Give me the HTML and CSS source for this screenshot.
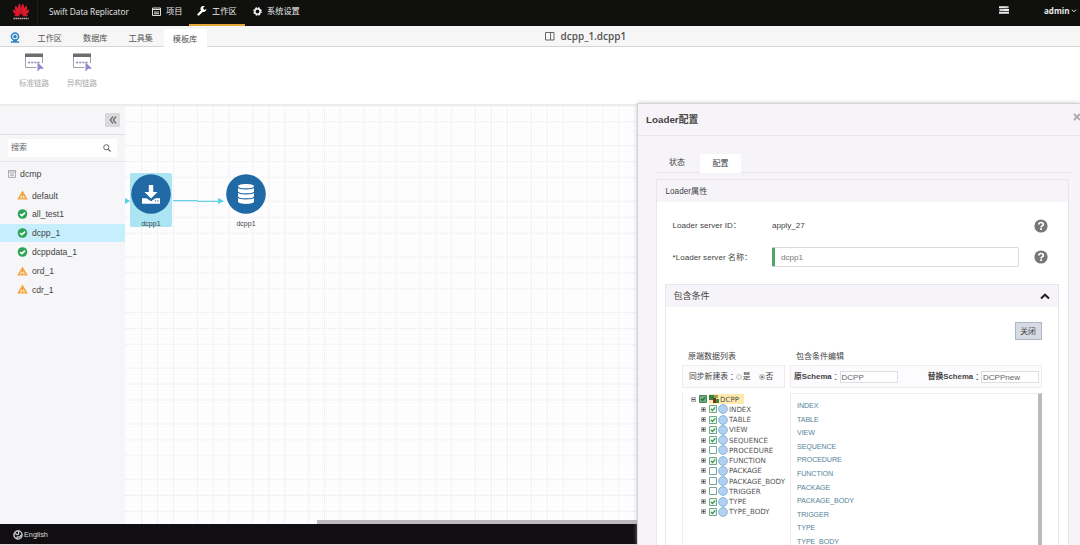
FILE: index.html
```html
<!DOCTYPE html>
<html lang="zh-CN">
<head>
<meta charset="utf-8">
<title>Swift Data Replicator</title>
<link rel="stylesheet" href="styles.css">
</head>
<body>
<svg class="defs" width="0" height="0">
  <defs>
    <symbol id="warn" viewBox="0 0 10 9"><path d="M5 .3 9.8 8.700H.2Z" fill="#f3a23c"/><path d="M5 3.200 6 5 7.600 7.400H2.400L4 5Z" fill="#fbe3bd"/><path d="M5 3.500v2.200M5 6.400v.8" stroke="#ee9526" stroke-width="1"/></symbol>
    <symbol id="ok" viewBox="0 0 10 10"><circle cx="5" cy="5" r="4.800" fill="#2ba457"/><path d="M2.600 5.100 4.400 6.700 7.600 3.700" fill="none" stroke="#fff" stroke-width="1.700"/></symbol>
    <symbol id="help" viewBox="0 0 14 14"><circle cx="7" cy="7" r="6.600" fill="#77767a"/><path d="M4.800 5.500C4.900 3.900 6 3.500 7 3.500c1.300 0 2.300.7 2.300 1.900 0 1.500-2.200 1.500-2.200 3" fill="none" stroke="#fff" stroke-width="1.700"/><path d="M7.100 9.300v1.700" stroke="#fff" stroke-width="1.800"/></symbol>
    <symbol id="flow" viewBox="0 0 20 20"><path d="M1.500 3v11.500h11M18.500 3v7" fill="none" stroke="#a0a0ac" stroke-width="1"/><path d="M1 .5h18v3.500H1z" fill="#6d6b70"/><path d="M4 9.500h12" stroke="#8887a8" stroke-width="1.500" stroke-dasharray="2 1.200"/><path d="M13.500 9.500v9l2.500-2.500 4-.5Z" fill="#8f8bcd"/></symbol>
    <symbol id="plus" viewBox="0 0 5 5"><path d="M.5.5h4v4h-4z" fill="#ddd" stroke="#888" stroke-width=".7"/><path d="M1 2.500h3M2.500 1v3" stroke="#444" stroke-width=".8"/></symbol>
    <symbol id="minus" viewBox="0 0 5 5"><path d="M.5.5h4v4h-4z" fill="#ddd" stroke="#888" stroke-width=".7"/><path d="M1 2.500h3" stroke="#333" stroke-width=".8"/></symbol>
    <symbol id="box" viewBox="0 0 8 8"><path d="M.5.5h7v7h-7z" fill="#fff" stroke="#76a89e"/></symbol>
    <symbol id="boxon" viewBox="0 0 8 8"><path d="M.5.5h7v7h-7z" fill="#edf8ed" stroke="#6fa88e"/><path d="M2 4 3.500 5.500 6.200 2.400" fill="none" stroke="#35934a" stroke-width="1.200"/></symbol>
    <symbol id="ball" viewBox="0 0 10 10"><circle cx="5" cy="5" r="4.400" fill="#b0d1f1" stroke="#7aa9d6" stroke-width=".8"/></symbol>
  </defs>
</svg>
<div class="app">
  <header class="topbar">
    <div class="logo">
      <svg width="18" height="18" viewBox="0 0 18 18"><g fill="#dc1a2e"><path d="M8.700 13C5.500 9 5 4 7.500 1.500 9 3 9.200 8 8.700 13Z"/><path d="M9.300 13C12.500 9 13 4 10.500 1.500 9 3 8.800 8 9.300 13Z"/><path d="M8 13.300C4 11 1.800 7 3.500 3.500 6 5 7.500 9 8 13.300Z"/><path d="M10 13.300C14 11 16.200 7 14.500 3.500 12 5 10.500 9 10 13.300Z"/><path d="M7.500 13.700C3 13.200.8 10.500.8 7.500 4 8 6.500 10.800 7.500 13.700Z"/><path d="M10.500 13.700c4.500-.5 6.700-3.200 6.700-6.200-3.200.5-5.700 3.300-6.700 6.200Z"/><path d="M7.300 14.200H3l-1-1.400h5ZM10.700 14.200H15l1-1.400h-5Z"/></g><path d="M1.500 16.500h15" stroke="#c9a9a9" stroke-width="1.600" stroke-dasharray="1.500 .5"/></svg>
    </div>
    <div class="brand">Swift Data Replicator</div>
    <nav class="nav">
      <a class="nav-item n1"><svg width="9" height="9" viewBox="0 0 9 9"><path d="M.5 1h8v7.500h-8zM.5 2.500h8M2 5h5M2 6.700h5" fill="none" stroke="#ddd"/></svg>项目</a>
      <a class="nav-item n2 active"><svg width="10" height="10" viewBox="0 0 10 10"><path d="M1.500 8.500 6 4" stroke="#fff" stroke-width="2.300" stroke-linecap="round"/><path d="M8.300.5A3 3 0 1 0 9.500 3L7.500 4 6 2.500 7 .6Z" fill="#fff"/></svg>工作区</a>
      <a class="nav-item n3"><svg width="9" height="9" viewBox="0 0 9 9"><circle cx="4.500" cy="4.500" r="3.500" fill="none" stroke="#fff" stroke-width="1.500" stroke-dasharray="1.800 .95"/><circle cx="4.500" cy="4.500" r="2.600" fill="none" stroke="#fff" stroke-width="1.300"/></svg>系统设置</a>
    </nav>
    <svg class="server" width="10" height="8" viewBox="0 0 10 8"><path d="M0 1.200h9.500M.5 4h9.500M0 6.800h10" stroke="#eee" stroke-width="2.100"/><path d="M6 1.200h3M1 4h4" stroke="#999" stroke-width=".6"/></svg>
    <div class="user">admin<svg width="6" height="4" viewBox="0 0 6 4"><path d="m.8.7 2.200 2 2.200-2" fill="none" stroke="#ddd"/></svg></div>
  </header>
  <div class="tabs">
    <svg class="cam" width="10" height="11" viewBox="0 0 10 11"><circle cx="5" cy="4.500" r="3.600" fill="#c8e6f6" stroke="#3484c4" stroke-width="1.500"/><circle cx="5" cy="4.500" r="1.500" fill="#2878b8"/><path d="M.8 10h8.400M3 8.500h4" stroke="#3484c4" stroke-width="1.300"/></svg>
    <span class="tab t1">工作区</span><span class="tab">数据库</span><span class="tab">工具集</span><span class="tab on">模板库</span>
    <div class="doc"><svg width="10" height="9" viewBox="0 0 10 9"><path d="M.5.5h8.500v7.500H.5zM5.500.5V8" fill="none" stroke="#666"/></svg>dcpp_1.dcpp1</div>
  </div>
  <div class="ribbon">
    <div class="tool"><svg width="20" height="20"><use href="#flow"/></svg><span>标准链路</span></div>
    <div class="tool"><svg width="20" height="20"><use href="#flow"/></svg><span>异构链路</span></div>
  </div>
  <main class="main">
    <aside class="side">
      <div class="side-head"><span class="collapse"><svg width="8" height="8" viewBox="0 0 8 8"><path d="M4 .7 1.300 4 4 7.300M7 .7 4.300 4 7 7.300" fill="none" stroke="#555" stroke-width="1.100"/></svg></span></div>
      <div class="search"><div class="search-box"><span>搜索</span><svg width="8" height="8" viewBox="0 0 8 8"><circle cx="3.300" cy="3.300" r="2.600" fill="none" stroke="#666"/><path d="m5.200 5.200 2.300 2.300" stroke="#666" stroke-width="1.200"/></svg></div></div>
      <div class="root"><svg width="8" height="8" viewBox="0 0 8 8"><path d="M.5.5h7v7h-7zM.5 2h7M2 4h4M2 5.700h4" fill="none" stroke="#999" stroke-width=".8"/></svg>dcmp</div>
      <div class="leaf"><svg width="11" height="10"><use href="#warn"/></svg><span>default</span></div>
      <div class="leaf"><svg width="11" height="10"><use href="#ok"/></svg><span>all_test1</span></div>
      <div class="leaf sel"><svg width="11" height="10"><use href="#ok"/></svg><span>dcpp_1</span></div>
      <div class="leaf"><svg width="11" height="10"><use href="#ok"/></svg><span>dcppdata_1</span></div>
      <div class="leaf"><svg width="11" height="10"><use href="#warn"/></svg><span>ord_1</span></div>
      <div class="leaf"><svg width="11" height="10"><use href="#warn"/></svg><span>cdr_1</span></div>
    </aside>
    <section class="canvas">
      <svg class="wire" width="110" height="10" viewBox="0 0 110 10"><path d="M0 2v6l5-3ZM93 2v6l6-3Z" fill="#55cfe2"/><path d="M48 4.700h24l1 .6h21" fill="none" stroke="#65d3e5" stroke-width="1.300"/></svg>
      <div class="node node-a"><svg width="40" height="40" viewBox="0 0 40 40"><circle cx="20" cy="20" r="19.800" fill="#2169a5"/><path d="M17.800 11h4.400v7h4.300L20 24.500 13.500 18h4.300Z" fill="#fff"/><path d="M11 24.200h4.500l4.500 3 4.500-3H29v5.500H11Z" fill="#fff"/><circle cx="24.500" cy="27" r=".7" fill="#2169a5"/><circle cx="27" cy="27" r=".7" fill="#2169a5"/></svg><span>dcpp1</span></div>
      <div class="node node-b"><svg width="40" height="40" viewBox="0 0 40 40"><circle cx="20" cy="20" r="19.800" fill="#2169a5"/><path d="M12 12.500c0-3.200 16-3.200 16 0v15c0 3.200-16 3.200-16 0Z" fill="#fff"/><path d="M12 13c1 2.500 15 2.500 16 0M12 18c1 2.500 15 2.500 16 0M12 23c1 2.500 15 2.500 16 0" fill="none" stroke="#2169a5" stroke-width="1.100"/></svg><span>dcpp1</span></div>
      <div class="hscroll"></div>
    </section>
  </main>
  <footer class="foot"><svg width="10" height="10" viewBox="0 0 10 10"><circle cx="5" cy="5" r="4.100" fill="none" stroke="#ddd" stroke-width="1.300"/><path d="M1.500 4c2-1 2 1 3.500.5S5 1 6 1M4 9c-1-2 1-2.500 2-2s1.500-2 2.500-2" fill="none" stroke="#ddd" stroke-width="1.200"/></svg>English</footer>

  <section class="panel">
    <div class="panel-head"><b>Loader配置</b><svg width="8" height="8" viewBox="0 0 8 8"><path d="m1 1 6 6m0-6L1 7" stroke="#aaa" stroke-width="1.800"/></svg></div>
    <div class="panel-tabs"><span>状态</span><span class="on">配置</span></div>
    <div class="card">
      <div class="card-head">Loader属性</div>
      <div class="card-body">
        <div class="row"><label>Loader server ID<i class="colon">：</i></label><span class="val">apply_27</span><svg width="14" height="14"><use href="#help"/></svg></div>
        <div class="row"><label>*Loader server 名称<i class="colon">：</i></label><div class="input">dcpp1</div><svg width="14" height="14"><use href="#help"/></svg></div>
        <div class="inner">
          <div class="inner-head">包含条件<svg width="10" height="7" viewBox="0 0 10 7"><path d="m1 5.500 4-3.800 4 3.800" fill="none" stroke="#222" stroke-width="2"/></svg></div>
          <div class="btn-row"><span class="btn">关闭</span></div>
          <div class="cols">
            <div class="col-l">
              <div class="col-title">原端数据列表</div>
              <div class="strip sync">同步新建表<i class="colon">：</i><span class="radio"></span>是<span class="radio checked"></span>否</div>
              <div class="tree">
                <div class="tr top"><svg width="5" height="5"><use href="#minus"/></svg><svg class="cb" width="8" height="8" viewBox="0 0 8 8"><path d="M.5.5h7v7h-7z" fill="#79ae82" stroke="#46825b"/><path d="M2 4 3.500 5.500 6.200 2.400" fill="none" stroke="#26713c" stroke-width="1.200"/></svg><span class="hl"><svg width="10" height="9" viewBox="0 0 10 9"><path d="M0 0h5v5H0z" fill="#33833c"/><path d="M4 3h3v5H4z" fill="#7b3528"/><path d="M5 0h4v3H5z" fill="#a59d5c"/><path d="M7 4h3v4H7z" fill="#3a8740"/></svg>DCPP</span></div>
                <div class="tr"><svg width="5" height="5"><use href="#plus"/></svg><svg class="cb" width="8" height="8"><use href="#boxon"/></svg><svg class="ball" width="10" height="10"><use href="#ball"/></svg>INDEX</div>
                <div class="tr"><svg width="5" height="5"><use href="#plus"/></svg><svg class="cb" width="8" height="8"><use href="#boxon"/></svg><svg class="ball" width="10" height="10"><use href="#ball"/></svg>TABLE</div>
                <div class="tr"><svg width="5" height="5"><use href="#plus"/></svg><svg class="cb" width="8" height="8"><use href="#boxon"/></svg><svg class="ball" width="10" height="10"><use href="#ball"/></svg>VIEW</div>
                <div class="tr"><svg width="5" height="5"><use href="#plus"/></svg><svg class="cb" width="8" height="8"><use href="#boxon"/></svg><svg class="ball" width="10" height="10"><use href="#ball"/></svg>SEQUENCE</div>
                <div class="tr"><svg width="5" height="5"><use href="#plus"/></svg><svg class="cb" width="8" height="8"><use href="#box"/></svg><svg class="ball" width="10" height="10"><use href="#ball"/></svg>PROCEDURE</div>
                <div class="tr"><svg width="5" height="5"><use href="#plus"/></svg><svg class="cb" width="8" height="8"><use href="#boxon"/></svg><svg class="ball" width="10" height="10"><use href="#ball"/></svg>FUNCTION</div>
                <div class="tr"><svg width="5" height="5"><use href="#plus"/></svg><svg class="cb" width="8" height="8"><use href="#box"/></svg><svg class="ball" width="10" height="10"><use href="#ball"/></svg>PACKAGE</div>
                <div class="tr"><svg width="5" height="5"><use href="#plus"/></svg><svg class="cb" width="8" height="8"><use href="#box"/></svg><svg class="ball" width="10" height="10"><use href="#ball"/></svg>PACKAGE_BODY</div>
                <div class="tr"><svg width="5" height="5"><use href="#plus"/></svg><svg class="cb" width="8" height="8"><use href="#box"/></svg><svg class="ball" width="10" height="10"><use href="#ball"/></svg>TRIGGER</div>
                <div class="tr"><svg width="5" height="5"><use href="#plus"/></svg><svg class="cb" width="8" height="8"><use href="#boxon"/></svg><svg class="ball" width="10" height="10"><use href="#ball"/></svg>TYPE</div>
                <div class="tr"><svg width="5" height="5"><use href="#plus"/></svg><svg class="cb" width="8" height="8"><use href="#boxon"/></svg><svg class="ball" width="10" height="10"><use href="#ball"/></svg>TYPE_BODY</div>
              </div>
            </div>
            <div class="col-r">
              <div class="col-title">包含条件编辑</div>
              <div class="strip schema"><b>原Schema</b><i class="colon">：</i><span class="mini">DCPP</span><b class="second">替换Schema</b><i class="colon">：</i><span class="mini">DCPPnew</span></div>
              <div class="links"><a>INDEX</a><a>TABLE</a><a>VIEW</a><a>SEQUENCE</a><a>PROCEDURE</a><a>FUNCTION</a><a>PACKAGE</a><a>PACKAGE_BODY</a><a>TRIGGER</a><a>TYPE</a><a>TYPE_BODY</a></div>
            </div>
          </div>
        </div>
      </div>
    </div>
  </section>
</div>
</body>
</html>
```
FILE: styles.css
```css
* { box-sizing: border-box; }
body { margin: 0; width: 1080px; height: 545px; overflow: hidden; font: 8px/1 "Liberation Sans", "Noto Sans CJK SC", sans-serif; color: #444; background: #fff; }
svg { display: block; flex: none; }
.defs { position: absolute; }
.colon { font-family: "Noto Sans CJK TC", sans-serif; font-style: normal; }
.app { position: relative; display: flex; flex-direction: column; width: 1080px; height: 545px; overflow: hidden; white-space: nowrap; }

.topbar { display: flex; flex: none; height: 26px; background: #10110f; color: #e8e8e8; font-family: "Open Sans", "Noto Sans CJK SC", sans-serif; }
.logo { width: 38px; padding: 2px 0 0 12px; border-right: 1px solid #1d1e1c; }
.brand { width: 103px; padding-left: 11px; font-size: 8.250px; line-height: 23px; }
.nav { display: flex; flex: 1; }
.nav-item { display: flex; align-items: center; height: 26px; padding-bottom: 4px; font-size: 8.200px; gap: 5px; }
.n1 { width: 48px; padding-left: 11px; }
.n2 { width: 56px; padding-left: 8px; }
.n3 { padding-left: 8px; }
.nav-item.active { border-bottom: 2px solid #e6a439; padding-bottom: 2px; }
.server { margin: 6px 35px 0 0; }
.user { display: flex; align-items: center; gap: 2px; height: 22px; width: 36px; font-size: 8px; font-weight: 700; }

.tabs { display: flex; flex: none; align-items: flex-end; height: 21px; background: #f6f6f6; border-bottom: 1px solid #d5d5d5; }
.cam { margin: 0 7px 3px 10px; }
.tab { width: 45.500px; height: 17px; line-height: 20px; text-align: center; font-size: 8.200px; color: #555; }
.tab.on { width: 43px; height: 18px; line-height: 22px; background: #fff; margin-bottom: -1px; }
.doc { display: flex; gap: 6px; align-items: center; height: 20px; margin-left: 338px; font-size: 10px; font-family: "Open Sans", sans-serif; font-weight: 600; color: #555; }
.ribbon { display: flex; flex: none; height: 59px; padding-left: 10px; border-bottom: 2px solid #ececec; background: #fff; }
.tool { display: flex; flex-direction: column; align-items: center; width: 48px; padding-top: 6px; gap: 7px; color: #aaa; font-size: 7.500px; }

.main { display: flex; flex: 1; min-height: 0; }
.side { width: 125px; flex: none; background: #f6f6f8; }
.side-head { display: flex; justify-content: flex-end; height: 29px; padding: 7px 5px 0 0; border-bottom: 1px solid #dedee0; }
.collapse { display: flex; align-items: center; justify-content: center; width: 15px; height: 14px; background: #dadadc; }
.search { height: 27px; padding: 4px 8px 0; border-bottom: 1px solid #e6e6e8; }
.search-box { display: flex; align-items: center; justify-content: space-between; height: 18px; padding: 0 6px 0 3px; background: #fff; color: #666; }
.root { display: flex; align-items: center; gap: 4px; height: 24px; padding-left: 8px; font-size: 8.800px; }
.leaf { display: flex; align-items: center; gap: 4px; height: 18.800px; padding-left: 17px; font-size: 8.600px; }
.leaf span { padding-top: 1px; }
.leaf.sel { background: #c7eefd; }
.canvas {
  position: relative; flex: 1; background-color: #fff;
  background-image:
    linear-gradient(#f3f1f4 1px, transparent 1px, transparent 16px, #f3f1f4 16px, #f3f1f4 17px, transparent 17px, transparent 32px, #f3f1f4 32px, #f3f1f4 33px, transparent 33px),
    linear-gradient(90deg, #f3f1f4 1px, transparent 1px, transparent 16px, #f3f1f4 16px, #f3f1f4 17px, transparent 17px, transparent 32px, #f3f1f4 32px, #f3f1f4 33px, transparent 33px),
    linear-gradient(#fbfafc 1px, transparent 1px),
    linear-gradient(90deg, #fbfafc 1px, transparent 1px);
  background-size: 100% 55.700px, 55.700px 100%, 100% 4px, 4px 100%;
  background-position: 0 39px, 16px 0, 0 0, 1px 0;
}
.wire { position: absolute; left: 0; top: 90px; }
.node { position: absolute; display: flex; flex-direction: column; align-items: center; width: 42px; height: 54px; padding-top: 1px; gap: 6px; font-size: 7px; border-radius: 2px; }
.node-a { left: 5px; top: 67px; background: #abe4f3; }
.node-b { left: 100px; top: 67px; }
.hscroll { position: absolute; left: 192px; right: 0; bottom: 0; height: 4px; background: #bbb9bc; }
.foot { display: flex; flex: none; align-items: center; height: 21px; padding: 1px 0 0 13px; gap: 1px; color: #ddd; background: #100e11; border-bottom: 1px solid #ddd; font-size: 7.300px; }

.panel { position: absolute; left: 638px; top: 104px; width: 442px; height: 441px; overflow: hidden; background: #f6f4f8; outline: 1px solid #d5d3d7; box-shadow: 0 0 5px #aaa; }
.panel-head { display: flex; justify-content: space-between; align-items: center; height: 32px; padding-left: 8px; border-bottom: 1px solid #e9e7eb; font-size: 9.800px; }
.panel-head b { font-weight: 600; color: #444; }
.panel-head svg { margin: 0 -1px 5px 0; }
.panel-tabs { display: flex; align-items: flex-end; height: 37px; margin: 0 8px 0 17px; border-bottom: 1px solid #e6e3e8; font-size: 8px; }
.panel-tabs span { width: 44px; height: 19px; line-height: 20px; text-align: center; }
.panel-tabs .on { width: 41px; margin-left: 1px; margin-bottom: -1px; background: #fff; }
.card { width: 413px; margin: 6px 0 0 17.500px; border: 1px solid #e9e6eb; background: #fff; height: 400px; }
.card-head { height: 22px; line-height: 23px; padding-left: 9px; background: #f6f4f8; font-size: 8.200px; }
.card-body { padding: 8px 9px 0 8px; }
.row { display: flex; align-items: center; height: 31.500px; font-size: 8.100px; }
.row label { width: 107.500px; padding-left: 8px; }
.val, .input { width: 247px; margin-right: 14.500px; }
.input { height: 20px; line-height: 19px; padding-left: 6px; border: 1px solid #dcd9df; border-left: 3px solid #4fa567; border-radius: 2px; color: #777; }
.inner { margin-top: 11px; height: 300px; border: 1px solid #e8e5ea; }
.inner-head { display: flex; align-items: center; justify-content: space-between; height: 22px; padding: 0 8px; background: #f6f4f8; font-size: 9px; }
.btn-row { display: flex; justify-content: flex-end; height: 44px; padding: 15px 16px 0; }
.btn { width: 27px; height: 18px; line-height: 17px; text-align: center; border: 1px solid #aeb6c6; background: #d7dbe3; font-size: 7.800px; }
.cols { display: flex; gap: 5px; padding-left: 16.500px; }
.col-l { width: 103px; }
.col-r { width: 252px; }
.col-title { height: 14px; padding-left: 6px; line-height: 12px; font-size: 8px; }
.strip { display: flex; align-items: center; height: 23px; background: #fcfbfd; border: 1px solid #edeaf0; font-size: 7.800px; padding-top: 1px; }
.sync { padding-left: 6px; }
.radio { width: 6px; height: 6px; margin-right: 1px; border: 1px solid #ccc; border-radius: 50%; background: #eee; }
.radio.checked { margin-left: 8px; background: #666; box-shadow: inset 0 0 0 1px #eee; }
.schema { padding: 1px 2px 0 3px; }
.mini { width: 58px; height: 12px; line-height: 11px; border: 1px solid #dfdce2; background: #fff; font-size: 8px; color: #666; padding-left: 1px; }
.second { margin-left: auto; }
.tree { height: 150px; margin-top: 5px; padding-top: 1px; border-left: 1px solid #edeaf0; font: 7.100px/1 "DejaVu Sans", sans-serif; }
.tr { display: flex; align-items: center; height: 10.250px; padding-left: 18px; color: #555; }
.tr.top { padding-left: 8px; }
.cb { margin-left: 3px; }
.ball { margin: 0 1px; }
.hl { display: flex; align-items: center; gap: 1px; width: 35px; height: 10px; margin-left: 2px; background: #ffe9ad; }
.links { display: flex; flex-direction: column; height: 170px; margin-top: 5px; padding: 6px 0 0 6px; border: 1px solid #edeaf0; border-right: 4px solid #bbb9bc; font-size: 7.100px; letter-spacing: -.08px; }
.links a { height: 13.600px; line-height: 13.600px; flex: none; color: #54849a; }
```
